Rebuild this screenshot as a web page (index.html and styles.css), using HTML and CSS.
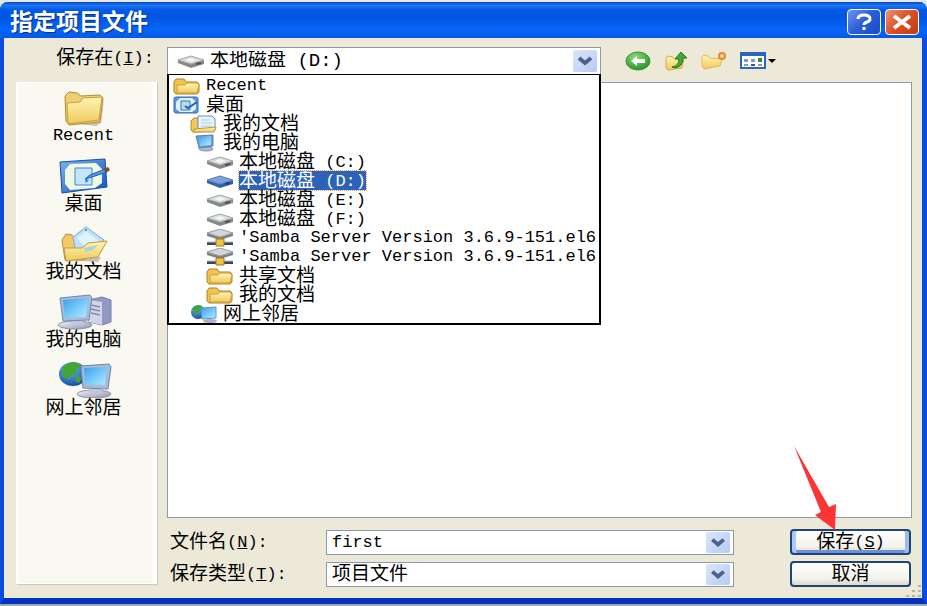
FILE: index.html
```html
<!DOCTYPE html>
<html lang="zh-CN">
<head>
  <meta charset="UTF-8" />
  <meta name="viewport" content="width=device-width, initial-scale=1.0"/>
  <title>指定项目文件</title>
  <link rel="stylesheet" href="styles.css">
</head>
<body>

<!-- Icon shapes, used below with <use> -->
<svg class="sprite" width="0" height="0" aria-hidden="true">
  <defs>
    <linearGradient id="g-folder" x1="0" y1="0" x2="0" y2="1">
      <stop offset="0" stop-color="#fff6b4"/><stop offset="1" stop-color="#f0c95c"/>
    </linearGradient>
    <linearGradient id="g-screen" x1="0" y1="0" x2="1" y2="1">
      <stop offset="0" stop-color="#3f9bea"/><stop offset="0.6" stop-color="#7fd0fb"/><stop offset="1" stop-color="#b8ecff"/>
    </linearGradient>
    <linearGradient id="g-desk" x1="0" y1="0" x2="1" y2="1">
      <stop offset="0" stop-color="#7fb4ee"/><stop offset="1" stop-color="#1450b8"/>
    </linearGradient>
    <linearGradient id="g-metal" x1="0" y1="0" x2="1" y2="1">
      <stop offset="0" stop-color="#f4f5fa"/><stop offset="1" stop-color="#8f94ad"/>
    </linearGradient>
    <radialGradient id="g-globe" cx="0.4" cy="0.3" r="0.8">
      <stop offset="0" stop-color="#6cc0f5"/><stop offset="1" stop-color="#0b3c9e"/>
    </radialGradient>
    <radialGradient id="g-back" cx="0.4" cy="0.3" r="0.8">
      <stop offset="0" stop-color="#8ddb77"/><stop offset="1" stop-color="#1f8b22"/>
    </radialGradient>
  </defs>

  <symbol id="folder" viewBox="0 0 56 36" preserveAspectRatio="none">
    <path d="M13 33 40 36l5-3 3-24-4 20z" fill="#a49c8a" opacity=".6"/>
    <path d="M9 6 13 2l8 1 4 3 19-1 3 3-3 24-31 3-3-4z" fill="#efcf70" stroke="#b58b35"/>
    <path d="M11 13 24 12l3-4 19-1-3 23-31 4z" fill="url(#g-folder)" stroke="#c99f40"/>
  </symbol>

  <symbol id="desktop" viewBox="0 0 56 36" preserveAspectRatio="none">
    <path d="M4 4 49 1l2 28-45 6z" fill="url(#g-desk)" stroke="#1650a8"/>
    <path d="M14 6 40 5l6 6v14l-7 5-25 2-5-6V12z" fill="#eefae4"/>
    <path d="M19 10h17v17H19z" fill="#c3e6fc" stroke="#4685ce"/>
    <path d="m29 21 5-4 15-6 2 3-15 5z" fill="#4d9de6" stroke="#1c5db8"/>
    <path d="m29 21 4 1-3 3z" fill="#2e79cf"/>
    <path d="m47 11 5-2 2 3-4 3z" fill="#824c3c"/>
  </symbol>

  <symbol id="documents" viewBox="0 0 56 36" preserveAspectRatio="none">
    <path d="m14 34 28 2 11-18-8 13z" fill="#a49c8a" opacity=".6"/>
    <path d="M6 14 10 8l6 1 4 5 8 2v18H9z" fill="#f2c869" stroke="#bd8e3b"/>
    <path d="m17 11 13-10 18 13-9 15-20-7z" fill="#bce2fa" stroke="#7fa9cd"/>
    <path d="m21 12 9-7 13 10-16 4z" fill="#e0f4ff"/>
    <path d="M8 22 26 22l6-5 19-2-9 16-32 4z" fill="url(#g-folder)" stroke="#c2963e"/>
    <path d="m28 22 14-3-5 5-8 2z" fill="#a5d7dc"/>
    <circle cx="30" cy="4" r="1" fill="#317eb3"/>
  </symbol>

  <symbol id="computer" viewBox="0 0 56 36" preserveAspectRatio="none">
    <path d="M33 6 46 3l9 3v22l-9 3-13-3z" fill="#9298c4" stroke="#787fa8"/>
    <path d="m33 6 13 2v23l-13-3z" fill="#d3d6ea"/>
    <path d="M35 11l9 2M35 15l9 2M35 19l9 2" stroke="#8489ac" stroke-width="1.5"/>
    <ellipse cx="19" cy="31" rx="17" ry="4" fill="url(#g-metal)" stroke="#8d91a8"/>
    <path d="M16 24h10l2 7H15z" fill="#c3c6d8"/>
    <path d="m4 4 30-3 2 3-3 22-26 1z" fill="#a6bbd7" stroke="#7189ae"/>
    <path d="m7 6 25-2-2 19-21 1z" fill="url(#g-screen)"/>
  </symbol>

  <symbol id="network" viewBox="0 0 56 36" preserveAspectRatio="none">
    <ellipse cx="17" cy="12" rx="14" ry="12" fill="url(#g-globe)"/>
    <path d="M7 5q7-6 15-4l4 4-6 2 1 5-6 1-3 5-6-4zM20 14l6 1-3 6-4-2z" fill="#45a534"/>
    <ellipse cx="38" cy="32" rx="17" ry="4" fill="url(#g-metal)" stroke="#8d91a8"/>
    <path d="M35 24h10l1 8H33z" fill="#c3c6d8"/>
    <path d="m25 4 28-2 2 3-3 22-25-1z" fill="#a6bbd7" stroke="#6c86ae"/>
    <path d="m28 6 23-1-2 18-20-1z" fill="url(#g-screen)"/>
  </symbol>

  <symbol id="small-folder" viewBox="0 0 28 18">
    <path d="M1 5 3 2h8l2 3h11l2 2v8l-2 2H3l-2-2z" fill="#f0c44f" stroke="#ad7f22"/>
    <path d="M4 8h8l2-2h10l2 2-2 8H4z" fill="url(#g-folder)" stroke="#d09f36"/>
  </symbol>

  <symbol id="small-desktop" viewBox="0 0 28 18">
    <rect x="1" y="1" width="24" height="16" rx="2" fill="#5c98e0" stroke="#2f6ab9"/>
    <path d="M7 2h12l4 4v7l-4 3H7l-4-3V6z" fill="#dff1fa"/>
    <path d="M8 5h9v9H8z" fill="#b9dcf6" stroke="#3473bd"/>
    <path d="m12 10 3 2 9-6" fill="none" stroke="#275fa9" stroke-width="2"/>
  </symbol>

  <symbol id="small-documents" viewBox="0 0 28 18">
    <path d="M1 6 4 3h4l3 4v10H3l-2-2z" fill="#f0c95c" stroke="#b58630"/>
    <path d="M8 1h14l3 3v11H8z" fill="#eaf5ff" stroke="#5d8fc9"/>
    <path d="M11 5h9M11 8h11M11 11h11" stroke="#a9cbea"/>
    <path d="m4 14 22-2-2 5H4z" fill="url(#g-folder)" stroke="#c29435"/>
  </symbol>

  <symbol id="small-computer" viewBox="0 0 28 18">
    <ellipse cx="16" cy="15" rx="7" ry="2" fill="#b2b8cb" stroke="#8b93ab"/>
    <path d="m6 2 17-1v11l-14 2z" fill="#6d9bd4" stroke="#5b80b5"/>
    <path d="m8 3 13-1v9l-11 1z" fill="url(#g-screen)"/>
  </symbol>

  <symbol id="drive" viewBox="0 0 28 18">
    <path d="m1 8 13-4 13 4v4l-13 4L1 11z" fill="#85888a"/>
    <path d="m1 8 13-4 13 4-13 4z" fill="#d9dbdc" stroke="#a7abad"/>
    <path d="m8 8 6-2 6 2-6 2z" fill="#f5f6f6"/>
    <path d="m19 12 5-1" stroke="#4c5254" stroke-width="2"/>
  </symbol>

  <symbol id="drive-selected" viewBox="0 0 28 18">
    <path d="m1 8 13-4 13 4v4l-13 4L1 11z" fill="#3560a7"/>
    <path d="m1 8 13-4 13 4-13 4z" fill="#7ea1d8" stroke="#5c85c4"/>
    <path d="m19 12 5-1" stroke="#1f4380" stroke-width="2"/>
  </symbol>

  <symbol id="net-drive" viewBox="0 0 28 18">
    <path d="m1 4 13-4 13 4v3l-13 4L1 7z" fill="#7f8283"/>
    <path d="m1 4 13-4 13 4-13 4z" fill="#d4d6d7" stroke="#9da1a3"/>
    <path d="M1 13h26v3H1z" fill="#3b4655"/>
    <path d="M1 13h26" stroke="#a8c0da"/>
    <path d="M10 10h8v7h-8z" fill="#f2c343" stroke="#a27a1f"/>
  </symbol>

  <symbol id="small-network" viewBox="0 0 28 18">
    <circle cx="8" cy="7" r="7" fill="url(#g-globe)"/>
    <path d="M3 3q5-4 9-2l-3 6-5 3z" fill="#45a534"/>
    <ellipse cx="20" cy="16" rx="7" ry="2" fill="#aab1c6"/>
    <path d="m11 3 15-1v11l-14 1z" fill="url(#g-screen)" stroke="#6590c8"/>
  </symbol>

  <symbol id="chevron" viewBox="0 0 24 22">
    <path d="m6 8 6 5 6-5" fill="none" stroke="#4d6185" stroke-width="4"/>
  </symbol>
</svg>

<main class="dialog">
  <header class="titlebar">
    <h1>指定项目文件</h1>
    <button class="caption-button help" type="button" aria-label="帮助">
      <svg viewBox="0 0 32 24"><path d="M10 9q0-4 6-4 6 0 6 4 0 2-3 3-3 1-3 3M16 17v3" fill="none" stroke="#fff" stroke-width="3"/></svg>
    </button>
    <button class="caption-button close" type="button" aria-label="关闭">
      <svg viewBox="0 0 32 24"><path d="m8 6 16 12M24 6 8 18" fill="none" stroke="#fff" stroke-width="4"/></svg>
    </button>
  </header>

  <form class="content">
    <label class="look-label" for="look-in">保存在<span class="latin">(<u>I</u>):</span></label>

    <div class="look-row">
      <div class="combo look-combo">
        <svg class="combo-icon"><use href="#drive"/></svg>
        <select id="look-in">
          <option>本地磁盘 (D:)</option>
        </select>
        <svg class="arrow"><use href="#chevron"/></svg>

        <ul class="dropdown" role="listbox" aria-label="保存在">
          <li role="option"><svg><use href="#small-folder"/></svg><span class="latin">Recent</span></li>
          <li role="option"><svg><use href="#small-desktop"/></svg><span>桌面</span></li>
          <li role="option" class="level-1"><svg><use href="#small-documents"/></svg><span>我的文档</span></li>
          <li role="option" class="level-1"><svg><use href="#small-computer"/></svg><span>我的电脑</span></li>
          <li role="option" class="level-2"><svg><use href="#drive"/></svg><span>本地磁盘<span class="latin"> (C:)</span></span></li>
          <li role="option" class="level-2 selected" aria-selected="true"><svg><use href="#drive-selected"/></svg><span>本地磁盘<span class="latin"> (D:)</span></span></li>
          <li role="option" class="level-2"><svg><use href="#drive"/></svg><span>本地磁盘<span class="latin"> (E:)</span></span></li>
          <li role="option" class="level-2"><svg><use href="#drive"/></svg><span>本地磁盘<span class="latin"> (F:)</span></span></li>
          <li role="option" class="level-2"><svg><use href="#net-drive"/></svg><span class="latin">'Samba Server Version 3.6.9-151.el6</span></li>
          <li role="option" class="level-2"><svg><use href="#net-drive"/></svg><span class="latin">'Samba Server Version 3.6.9-151.el6</span></li>
          <li role="option" class="level-2"><svg><use href="#small-folder"/></svg><span>共享文档</span></li>
          <li role="option" class="level-2"><svg><use href="#small-folder"/></svg><span>我的文档</span></li>
          <li role="option" class="level-1"><svg><use href="#small-network"/></svg><span>网上邻居</span></li>
        </ul>
      </div>

      <div class="toolbar">
        <button type="button" aria-label="后退">
          <svg width="26" height="20" viewBox="0 0 26 20">
            <ellipse cx="13" cy="10" rx="12" ry="9" fill="url(#g-back)" stroke="#36902f"/>
            <path d="m12 5-6 5 6 5v-3h8V8h-8z" fill="#fff"/>
          </svg>
        </button>
        <button type="button" aria-label="向上一级">
          <svg width="24" height="20" viewBox="0 0 24 20">
            <path d="M2 7 4 5l5 1 2 2 9-1-2 10-14 2-2-2z" fill="url(#g-folder)" stroke="#d4aa49"/>
            <path d="M8 16q7-1 7-8h-4l6-7 6 6h-4q0 9-8 10z" fill="#45a63a" stroke="#267a25"/>
          </svg>
        </button>
        <button type="button" aria-label="新建文件夹">
          <svg width="26" height="20" viewBox="0 0 26 20">
            <path d="M1 6 3 4l4 1 2 2 12 1-2 7-16 3-2-3z" fill="url(#g-folder)" stroke="#e2b95b"/>
            <circle cx="21" cy="5" r="3" fill="#ffd98f" stroke="#e08a35" stroke-width="2"/>
          </svg>
        </button>
        <button type="button" aria-label="查看">
          <svg width="36" height="20" viewBox="0 0 36 20">
            <path d="M1 2h24v15H1z" fill="#fff" stroke="#2867be" stroke-width="2"/>
            <path d="M0 1h26v4H0z" fill="#2867be"/>
            <path d="M4 8h4v3H4zM11 8h4v3h-4zM4 13h4v2H4z" fill="#7f98c4"/>
            <path d="M18 7h4v4h-4z" fill="#2f8a3c"/>
            <path d="M18 13h4v2h-4z" fill="#b08a9a"/>
            <path d="M11 13h4v2h-4z" fill="#2f56ad"/>
            <path d="M28 8h8l-4 4z" fill="#000"/>
          </svg>
        </button>
      </div>
    </div>

    <nav class="places">
      <a href="#recent"><svg><use href="#folder"/></svg><span class="latin">Recent</span></a>
      <a href="#desktop-place"><svg><use href="#desktop"/></svg><span>桌面</span></a>
      <a href="#documents-place"><svg><use href="#documents"/></svg><span>我的文档</span></a>
      <a href="#computer-place"><svg><use href="#computer"/></svg><span>我的电脑</span></a>
      <a href="#network-place"><svg><use href="#network"/></svg><span>网上邻居</span></a>
    </nav>

    <div class="file-list"></div>

    <div class="fields">
      <label for="file-name">文件名<span class="latin">(<u>N</u>):</span></label>
      <div class="combo">
        <input id="file-name" type="text" value="first">
        <svg class="arrow"><use href="#chevron"/></svg>
      </div>
      <button class="push default" type="submit">保存<span class="latin">(<u>S</u>)</span></button>

      <label for="file-type">保存类型<span class="latin">(<u>T</u>):</span></label>
      <div class="combo">
        <select id="file-type">
          <option>项目文件</option>
        </select>
        <svg class="arrow"><use href="#chevron"/></svg>
      </div>
      <button class="push" type="button">取消</button>
    </div>
  </form>

  <!-- Resize grip -->
  <svg class="grip" viewBox="0 0 18 14" aria-hidden="true">
    <path d="M14 1h3v2h-3zM8 6h3v2H8zM14 6h3v2h-3zM2 11h3v2H2zM8 11h3v2H8zM14 11h3v2h-3z" fill="#b8b4a2"/>
  </svg>

  <!-- Pointer to the save button -->
  <svg class="pointer" viewBox="0 0 44 86" aria-hidden="true">
    <path d="M1 1 36 62l7-3-1 26-20-15 6-3z" fill="#fb3436"/>
  </svg>
</main>

</body>
</html>
```
FILE: styles.css
```css
:root {
  --face: #ece9d8;
  --line: #8a9bae;
  --select: #2c62b8;
}

* {
  box-sizing: border-box;
}

body {
  margin: 0;
  padding: 2px 0;
  background: linear-gradient(#e4e8ee 50%, #a8a8a8 50%);
  color: #000;
  font-family: "Liberation Sans", "Noto Sans CJK SC", sans-serif;
  font-size: 19px;
  line-height: 20px;
}

button,
input,
select {
  font: inherit;
  color: inherit;
}

svg {
  display: block;
  flex: none;
}

.sprite {
  position: absolute;
}

.latin,
.combo input {
  font-family: "Liberation Mono", "Noto Sans CJK SC", monospace;
  font-size: 17px;
}

.latin {
  white-space: pre;
}

/* latin run after chinese text: centre it without growing the line */
span > .latin,
label > .latin,
button > .latin {
  line-height: 0;
  vertical-align: 1px;
}

.dialog {
  position: relative;
  display: flex;
  flex-direction: column;
  min-height: calc(100vh - 4px);
  border: solid #0a4be0;
  border-width: 0 5px 6px 4px;
  border-bottom-color: #0233c4;
  border-radius: 8px 8px 0 0;
  background: var(--face);
}

.titlebar {
  display: flex;
  align-items: center;
  gap: 4px;
  height: 36px;
  margin: 0 -5px 0 -4px;
  padding: 4px 8px 0 10px;
  border-radius: 8px 8px 0 0;
  background: linear-gradient(#0a3fb8 0, #1a78f5 3px, #0558e6 8px, #0256e2 16px, #0566fa 28px, #0458e8 100%);
}

.titlebar h1 {
  flex: 1;
  margin: 0;
  color: #fff;
  font-size: 23px;
  line-height: 24px;
  text-shadow: 1px 1px 1px #0a2f86;
}

.caption-button {
  width: 34px;
  height: 26px;
  padding: 0;
  border: 1px solid #fff;
  border-radius: 4px;
  background: linear-gradient(135deg, #6f97ee, #2a5cd8 50%, #1c4cc8);
}

.caption-button.close {
  background: linear-gradient(135deg, #eb9277, #dc4d25 50%, #c23c12);
}

.content {
  flex: 1;
  display: grid;
  grid-template-columns: 141px minmax(0, 1fr);
  grid-template-rows: 28px 1fr auto;
  column-gap: 10px;
  padding: 9px 10px 11px 12px;
}

.look-label {
  padding: 1px 3px 0 0;
  text-align: right;
  white-space: nowrap;
}

.look-row {
  display: flex;
  align-items: center;
}

.combo {
  position: relative;
  height: 25px;
  border: 1px solid var(--line);
  background: #fff;
}

.combo input,
.combo select {
  display: block;
  width: 100%;
  height: 100%;
  padding: 0 28px 0 5px;
  border: 0;
  outline: 0;
  background: transparent;
  appearance: none;
}

.arrow {
  position: absolute;
  top: 1px;
  right: 3px;
  width: 24px;
  height: 21px;
  border-radius: 2px;
  background: linear-gradient(135deg, #dbe6fd, #b5caf5);
  pointer-events: none;
}

.look-combo {
  flex: 0 1 434px;
  height: 28px;
}

.combo.look-combo select {
  padding-left: 42px;
  font-family: "Liberation Mono", "Noto Sans CJK SC", monospace;
}

.look-combo .arrow {
  top: 2px;
  height: 22px;
}

.combo-icon {
  position: absolute;
  top: 4px;
  left: 9px;
  width: 28px;
  height: 18px;
}

.dropdown {
  position: absolute;
  z-index: 2;
  top: 26px;
  left: -1px;
  right: -1px;
  margin: 0;
  padding: 1px 0 0 4px;
  border: 2px solid #000;
  border-top-width: 1px;
  background: #fff;
  list-style: none;
}

.dropdown li {
  display: flex;
  align-items: center;
  gap: 5px;
  height: 19px;
  line-height: 19px;
  white-space: nowrap;
}

.dropdown li svg {
  width: 28px;
  height: 18px;
}

.dropdown .level-1 {
  padding-left: 17px;
}

.dropdown .level-2 {
  padding-left: 33px;
}

.dropdown .selected > span {
  outline: 1px dotted #d9a35a;
  background: var(--select);
  color: #fff;
}

.toolbar {
  display: flex;
  align-items: center;
  gap: 13px;
  margin-left: 24px;
}

.toolbar button {
  padding: 0;
  border: 0;
  background: none;
}

.places {
  grid-row: 2 / 4;
  display: flex;
  flex-direction: column;
  gap: 12px;
  margin: 7px 0 3px;
  padding: 7px 4px 0 0;
  border: solid #fff;
  border-width: 1px 4px 1px 2px;
  box-shadow: 1px 1px 1px #cfccbc;
  background: #f9f8f1;
}

.places a {
  display: flex;
  flex-direction: column;
  align-items: center;
  color: #000;
  text-decoration: none;
}

.places svg {
  width: 56px;
  height: 36px;
}

.file-list {
  margin: 7px 0 11px;
  border: 1px solid var(--line);
  background: #fff;
}

.fields {
  grid-column: 2;
  display: grid;
  grid-template-columns: 156px minmax(0, 1fr) 121px;
  grid-auto-rows: 26px;
  row-gap: 6px;
  align-items: center;
  padding: 0 1px 0 3px;
}

.fields .combo {
  margin-right: 56px;
}

.push {
  height: 26px;
  padding: 0;
  border: 2px solid #1d4677;
  border-radius: 4px;
  background: linear-gradient(#fff, #f3f2ec 70%, #dcd8cb);
  line-height: 20px;
}

.push.default {
  box-shadow: inset 4px 0 #adc8f7, inset -4px 0 #9dbbf0, inset 0 -3px #6e91dd;
}

.grip {
  position: absolute;
  right: 0;
  bottom: 0;
  width: 18px;
  height: 14px;
}

.pointer {
  position: absolute;
  z-index: 3;
  right: 85px;
  bottom: 67px;
  width: 44px;
  height: 86px;
  pointer-events: none;
}
```
